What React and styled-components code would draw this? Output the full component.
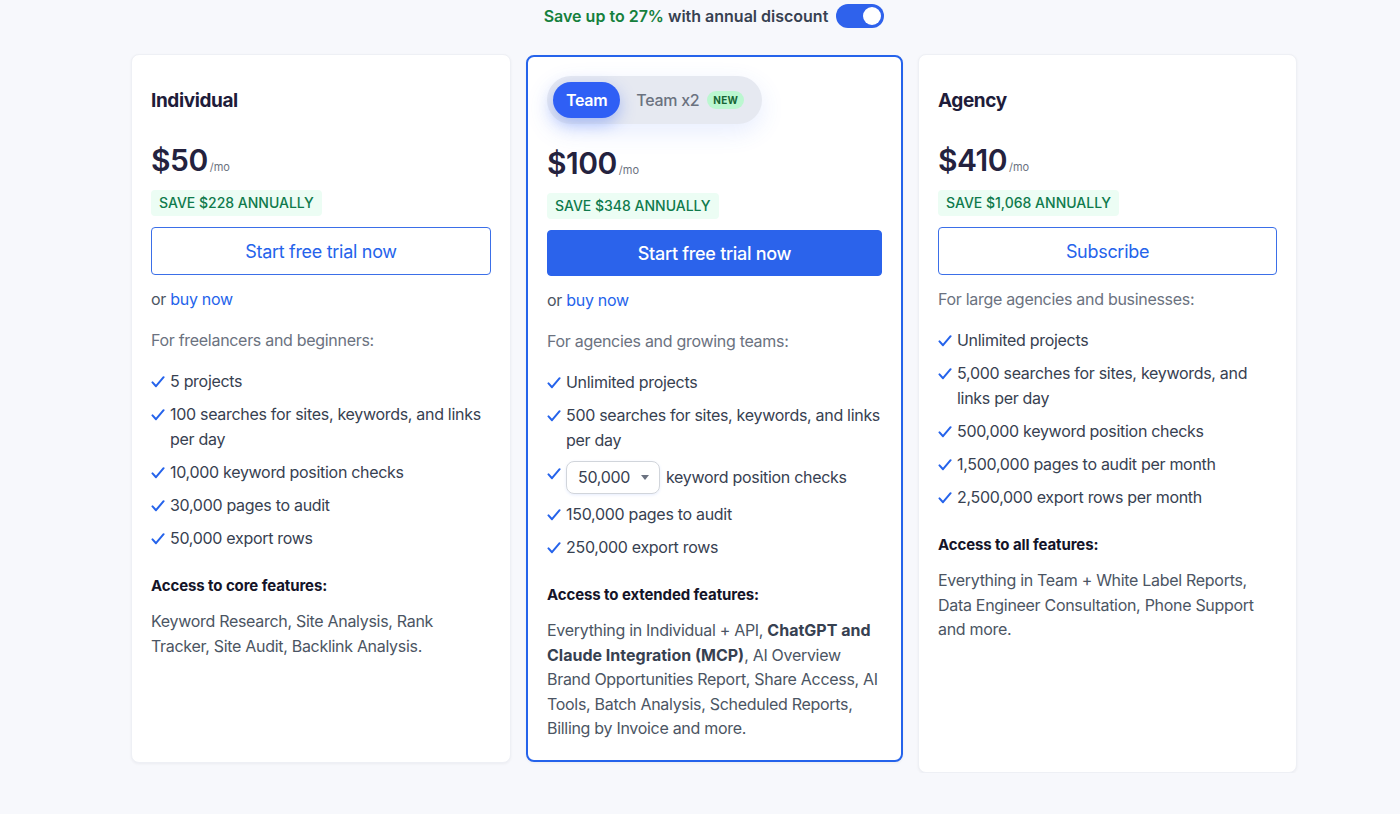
import React from "react";
import styled, { createGlobalStyle, css } from "styled-components";

const GlobalStyle = createGlobalStyle`
  * { box-sizing: border-box; }
  body {
    margin: 0;
    background: #f7f8fc;
    font-family: Inter, "Noto Sans", sans-serif;
    color: #374151;
    letter-spacing: -0.3px;
    -webkit-font-smoothing: antialiased;
  }
`;

const Page = styled.div`
  width: 1166px;
  margin-left: 131px;
  padding-top: 4px;
`;

const DiscountRow = styled.div`
  display: flex;
  align-items: center;
  justify-content: center;
  gap: 8px;
  height: 24px;
  margin-bottom: 26px;
  font-size: 16px;
  font-weight: 600;
  letter-spacing: 0;
  color: #374151;
`;

const Green = styled.span`
  color: #15803d;
`;

const Switch = styled.div`
  width: 48px;
  height: 24px;
  border-radius: 12px;
  background: #2f62ec;
  padding: 3px;
  display: flex;
  justify-content: flex-end;
  &::after {
    content: "";
    width: 18px;
    height: 18px;
    border-radius: 50%;
    background: #fff;
  }
`;

const Grid = styled.div`
  display: grid;
  grid-template-columns: 380px 377px 379px;
  gap: 15px;
  align-items: start;
`;

const Card = styled.div`
  background: #fff;
  border-radius: 8px;
  padding: 21px 19px 20px;
  box-shadow: 0 1px 3px rgba(15, 23, 42, 0.05);
  border: 1px solid #eef0f5;
  min-height: ${(p) => p.$minH}px;
  ${(p) =>
    p.$featured &&
    css`
      border: 2px solid #2563eb;
      padding: 19px 19px 19px;
      margin-top: 1px;
    `}
`;

const Title = styled.h3`
  margin: 0;
  height: 48px;
  display: flex;
  align-items: center;
  font-size: 19px;
  font-weight: 700;
  letter-spacing: -0.4px;
  color: #1e1c3a;
`;

const Pill = styled.div`
  display: inline-flex;
  align-items: center;
  height: 48px;
  padding: 6px;
  border-radius: 24px;
  background: #e6e9f1;
  box-shadow: 0 8px 24px rgba(59, 110, 246, 0.12);
`;

const PillTab = styled.div`
  height: 36px;
  display: flex;
  align-items: center;
  gap: 8px;
  padding: ${(p) => (p.$active ? "0 13px" : "0 12px 0 16px")};
  border-radius: 18px;
  font-size: 16px;
  font-weight: ${(p) => (p.$active ? 600 : 500)};
  color: ${(p) => (p.$active ? "#fff" : "#6b7280")};
  background: ${(p) => (p.$active ? "#2f5ff5" : "transparent")};
  box-shadow: ${(p) => (p.$active ? "0 6px 16px rgba(47, 95, 245, 0.35)" : "none")};
`;

const NewBadge = styled.span`
  font-size: 10px;
  font-weight: 700;
  letter-spacing: 0.3px;
  color: #166534;
  background: #bbf7d0;
  border-radius: 10px;
  padding: 3px 6px;
`;

const PriceRow = styled.div`
  display: flex;
  align-items: baseline;
  margin-top: ${(p) => p.$mt}px;
  height: 36px;
`;

const Price = styled.span`
  font-size: 30px;
  font-weight: 600;
  color: #24223e;
  letter-spacing: -0.5px;
`;

const Per = styled.span`
  font-size: 11px;
  color: #6b7280;
  margin-left: 2px;
  letter-spacing: 0;
`;

const SaveBadge = styled.div`
  display: inline-block;
  margin-top: 12px;
  height: 26px;
  line-height: 26px;
  padding: 0 8px;
  border-radius: 4px;
  background: #ecfdf4;
  color: #0f7a4c;
  font-size: 14px;
  font-weight: 500;
  letter-spacing: 0;
`;

const Button = styled.button`
  display: block;
  width: 100%;
  margin-top: 11px;
  height: ${(p) => (p.$primary ? 46 : 48)}px;
  border-radius: 4px;
  font-family: inherit;
  font-size: 18px;
  letter-spacing: -0.3px;
  font-weight: ${(p) => (p.$primary ? 500 : 400)};
  cursor: pointer;
  border: 1px solid ${(p) => (p.$primary ? "#2b63eb" : "#3b6fe8")};
  background: ${(p) => (p.$primary ? "#2b63eb" : "#fff")};
  color: ${(p) => (p.$primary ? "#fff" : "#2563eb")};
`;

const BuyNow = styled.div`
  margin-top: 12px;
  font-size: 16px;
  line-height: 25px;
  color: #4b5563;
  a {
    color: #2563eb;
    text-decoration: none;
  }
`;

const Lead = styled.div`
  margin-top: ${(p) => p.$mt}px;
  font-size: 16px;
  line-height: 25px;
  color: #6b7280;
`;

const List = styled.ul`
  list-style: none;
  margin: 16px 0 0;
  padding: 0;
  display: flex;
  flex-direction: column;
  gap: 8px;
`;

const Item = styled.li`
  display: flex;
  align-items: ${(p) => (p.$center ? "center" : "flex-start")};
  gap: 5px;
  font-size: 16px;
  line-height: 25px;
  color: #374151;
`;

const CheckWrap = styled.span`
  flex: 0 0 14px;
  height: 25px;
  display: flex;
  align-items: center;
  align-self: flex-start;
`;

const Select = styled.div`
  display: inline-flex;
  align-items: center;
  justify-content: space-between;
  width: 94px;
  height: 33px;
  padding: 0 10px 0 11px;
  margin-right: 1px;
  border: 1px solid #d1d5db;
  border-radius: 8px;
  box-shadow: 0 1px 3px rgba(59, 110, 246, 0.12);
  color: #374151;
  font-size: 16px;
`;

const Caret = styled.span`
  width: 0;
  height: 0;
  border-left: 4.5px solid transparent;
  border-right: 4.5px solid transparent;
  border-top: 5px solid #6b7280;
`;

const AccessTitle = styled.div`
  margin-top: 24px;
  font-size: 15px;
  font-weight: 700;
  line-height: 22px;
  letter-spacing: -0.1px;
  color: #141428;
`;

const Body = styled.p`
  margin: 12px 0 0;
  font-size: 16px;
  line-height: 24.5px;
  color: #4b5563;
  b {
    font-weight: 700;
    letter-spacing: 0;
    color: #374151;
  }
`;

const Check = () => (
  <CheckWrap>
    <svg width="14" height="14" viewBox="0 0 14 14">
      <path
        d="M1.5 7.4 L5 11.2 L12.6 2.2"
        fill="none"
        stroke="#2563eb"
        strokeWidth="2"
        strokeLinecap="round"
        strokeLinejoin="round"
      />
    </svg>
  </CheckWrap>
);

const Features = ({ items }) => (
  <List>
    {items.map((it, i) => (
      <Item key={i}>
        <Check />
        <span>{it}</span>
      </Item>
    ))}
  </List>
);

export default function App() {
  return (
    <>
      <GlobalStyle />
      <Page>
        <DiscountRow>
          <span>
            <Green>Save up to 27%</Green> with annual discount
          </span>
          <Switch />
        </DiscountRow>
        <Grid>
          <Card $minH={709}>
            <Title>Individual</Title>
            <PriceRow $mt={18}>
              <Price>$50</Price>
              <Per>/mo</Per>
            </PriceRow>
            <SaveBadge>SAVE $228 ANNUALLY</SaveBadge>
            <Button>Start free trial now</Button>
            <BuyNow>
              or <a href="#">buy now</a>
            </BuyNow>
            <Lead $mt={16}>For freelancers and beginners:</Lead>
            <Features
              items={[
                "5 projects",
                "100 searches for sites, keywords, and links per day",
                "10,000 keyword position checks",
                "30,000 pages to audit",
                "50,000 export rows",
              ]}
            />
            <AccessTitle>Access to core features:</AccessTitle>
            <Body>
              Keyword Research, Site Analysis, Rank Tracker, Site Audit, Backlink
              Analysis.
            </Body>
          </Card>

          <Card $featured $minH={707}>
            <Pill>
              <PillTab $active>Team</PillTab>
              <PillTab>
                Team x2 <NewBadge>NEW</NewBadge>
              </PillTab>
            </Pill>
            <PriceRow $mt={21}>
              <Price>$100</Price>
              <Per>/mo</Per>
            </PriceRow>
            <SaveBadge>SAVE $348 ANNUALLY</SaveBadge>
            <Button $primary>Start free trial now</Button>
            <BuyNow>
              or <a href="#">buy now</a>
            </BuyNow>
            <Lead $mt={16}>For agencies and growing teams:</Lead>
            <List>
              <Item>
                <Check />
                <span>Unlimited projects</span>
              </Item>
              <Item>
                <Check />
                <span>500 searches for sites, keywords, and links per day</span>
              </Item>
              <Item $center>
                <Check />
                <Select>
                  50,000 <Caret />
                </Select>
                <span>keyword position checks</span>
              </Item>
              <Item>
                <Check />
                <span>150,000 pages to audit</span>
              </Item>
              <Item>
                <Check />
                <span>250,000 export rows</span>
              </Item>
            </List>
            <AccessTitle>Access to extended features:</AccessTitle>
            <Body>
              Everything in Individual + API,{" "}
              <b>ChatGPT and Claude Integration (MCP)</b>, AI Overview Brand
              Opportunities Report, Share Access, AI Tools, Batch Analysis,
              Scheduled Reports, Billing by Invoice and more.
            </Body>
          </Card>

          <Card $minH={719}>
            <Title>Agency</Title>
            <PriceRow $mt={18}>
              <Price>$410</Price>
              <Per>/mo</Per>
            </PriceRow>
            <SaveBadge>SAVE $1,068 ANNUALLY</SaveBadge>
            <Button>Subscribe</Button>
            <Lead $mt={12}>For large agencies and businesses:</Lead>
            <Features
              items={[
                "Unlimited projects",
                "5,000 searches for sites, keywords, and links per day",
                "500,000 keyword position checks",
                "1,500,000 pages to audit per month",
                "2,500,000 export rows per month",
              ]}
            />
            <AccessTitle>Access to all features:</AccessTitle>
            <Body>
              Everything in Team + White Label Reports, Data Engineer
              Consultation, Phone Support and more.
            </Body>
          </Card>
        </Grid>
      </Page>
    </>
  );
}
